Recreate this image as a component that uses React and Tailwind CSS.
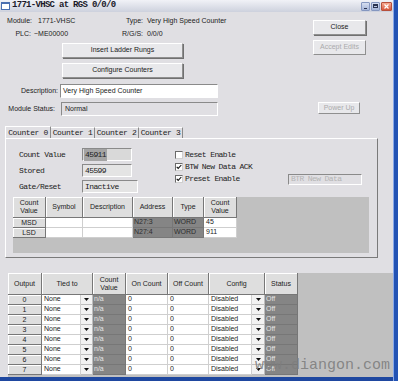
import React from 'react';

const sans = "font-['Liberation_Sans',Arial,sans-serif]";
const mono = "font-['Liberation_Mono','Courier_New',monospace]";

const Btn = ({ children, className = '', disabled }) => (
  <div
    className={`flex items-center justify-center border border-t-white border-l-white border-r-[#8f8f8f] border-b-[#8f8f8f] bg-[#e8e8eb] text-[7px] ${sans} ${
      disabled ? 'text-[#ababab]' : 'text-[#1a1a1a] shadow-[1px_1px_0_#707070]'
    } ${className}`}
  >
    {children}
  </div>
);

const Inset = ({ children, className = '' }) => (
  <div className={`flex items-center border border-t-[#8a8a8a] border-l-[#8a8a8a] border-r-white border-b-white ${className}`}>
    {children}
  </div>
);

const Hd = ({ children, className = '' }) => (
  <div
    className={`flex items-center justify-center text-center leading-[8px] text-[#222] bg-[#dedede] border-r border-b border-r-[#777] border-b-[#777] shadow-[inset_1px_1px_0_#fff] ${className}`}
  >
    {children}
  </div>
);

const White = ({ children }) => (
  <div className="flex items-center pl-[2px] bg-white border-r border-b border-[#cfcfcf] text-[#222]">{children}</div>
);

const Dark = ({ children, light }) => (
  <div
    className={`flex items-center pl-[1px] bg-[#858585] border-r border-b border-[#777] ${light ? 'text-[#e4e4e4]' : 'text-[#2e2e2e]'}`}
  >
    {children}
  </div>
);

const Arrow = () => (
  <div className="flex items-center justify-center bg-[#f2f2f2] border-r border-b border-[#bdbdbd]">
    <svg width="5" height="3" viewBox="0 0 5 3">
      <path d="M0 0h5L2.5 3z" fill="#111" />
    </svg>
  </div>
);

const Check = ({ checked, label, className = '' }) => (
  <div className={`flex items-center ${className}`}>
    <div className="w-[8px] h-[8px] bg-white border border-t-[#6a6a6a] border-l-[#6a6a6a] border-r-[#cfcfcf] border-b-[#cfcfcf] flex items-center justify-center">
      {checked && (
        <svg width="6" height="6" viewBox="0 0 6 6">
          <path d="M0.7 2.8l1.5 1.6L5.3 1" stroke="#111" strokeWidth="1.1" fill="none" />
        </svg>
      )}
    </div>
    <span className="ml-[2px]">{label}</span>
  </div>
);

const TitleBar = () => (
  <div className="h-[12px] flex items-center bg-gradient-to-b from-[#f1f2f7] to-[#cdd1dd] pl-[1px]">
    <div className="w-[9px] h-[8px] bg-white border border-[#4a6fb0] border-t-2" />
    <span className={`ml-[2px] text-[9px] font-bold tracking-[-0.7px] text-[#1a1a2a] ${mono}`}>1771-VHSC at RGS 0/0/0</span>
    <div className="ml-auto flex items-center gap-[1px] pr-[1px]">
      <div className="w-[9px] h-[9px] rounded-[1px] bg-gradient-to-b from-[#d6def0] to-[#a5b5d8] border border-[#8597c0] flex items-end justify-center pb-[1px]">
        <div className="w-[3px] h-[1px] bg-[#2a3350]" />
      </div>
      <div className="w-[9px] h-[9px] rounded-[1px] bg-gradient-to-b from-[#d6def0] to-[#a5b5d8] border border-[#8597c0] flex items-center justify-center">
        <div className="w-[5px] h-[4px] border border-t-2 border-[#2a3350]" />
      </div>
      <div className="w-[11px] h-[9px] rounded-[1px] bg-gradient-to-b from-[#f5a890] to-[#d5553c] border border-[#b7503c] flex items-center justify-center">
        <svg width="5" height="5" viewBox="0 0 5 5">
          <path d="M0.5 0.5l4 4M4.5 0.5l-4 4" stroke="#fff" strokeWidth="1.2" />
        </svg>
      </div>
    </div>
  </div>
);

const outputs = [0, 1, 2, 3, 4, 5, 6, 7];

export default function App() {
  return (
    <div className="relative w-[398px] h-[381px] overflow-hidden flex bg-[#1f48a0]">
      <div className="flex flex-col w-[393px]">
        <TitleBar />
        <div className="flex-1 flex flex-col bg-[#e0dfe3]">
          {/* header info + buttons */}
          <div className="flex">
            <div className={`w-[313px] flex flex-col text-[7px] text-[#222] ${sans}`}>
              <div className="mt-[3px] h-[12px] flex items-center">
                <span className="w-[32px] text-right">Module:</span>
                <span className="w-[93px] pl-[6px]">1771-VHSC</span>
                <span className="w-[18px] text-right">Type:</span>
                <span className="pl-[4px]">Very High Speed Counter</span>
              </div>
              <div className="mt-[1px] h-[12px] flex items-center">
                <span className="w-[31px] text-right">PLC:</span>
                <span className="w-[91px] pl-[3px]">~ME00000</span>
                <span className="w-[21px] text-right">R/G/S:</span>
                <span className="pl-[4px]">0/0/0</span>
              </div>
              <Btn className="mt-[3px] ml-[62px] w-[121px] h-[15px]">Insert Ladder Rungs</Btn>
              <Btn className="mt-[5px] ml-[62px] w-[121px] h-[15px]">Configure Counters</Btn>
              <div className="mt-[6px] h-[14px] flex items-center">
                <span className="w-[58px] text-right">Description:</span>
                <Inset className="ml-[2px] w-[158px] h-full bg-white pl-[2px]">Very High Speed Counter</Inset>
              </div>
              <div className="mt-[4px] h-[14px] flex items-center">
                <span className="w-[55px] text-right">Module Status:</span>
                <Inset className="ml-[6px] w-[157px] h-full pl-[3px]">Normal</Inset>
              </div>
            </div>
            <div className="w-[53px] flex flex-col">
              <Btn className="mt-[8px] h-[15px]">Close</Btn>
              <Btn disabled className="mt-[5px] h-[15px]">Accept Edits</Btn>
              <Btn disabled className="mt-[47px] ml-[5px] w-[42px] h-[12px] border-[#c4c4c4]">Power Up</Btn>
            </div>
          </div>

          {/* tabs */}
          <div className={`mt-[10px] ml-[5px] flex items-end h-[12px] text-[8px] tracking-[-0.4px] text-[#222] ${mono}`}>
            <div className="h-[12px] w-[46px] border-t border-l border-r border-t-white border-l-white border-r-[#8a8a8a] flex items-center justify-center">
              Counter 0
            </div>
            {['Counter 1', 'Counter 2', 'Counter 3'].map((t) => (
              <div key={t} className="h-[11px] w-[44px] border-r border-t border-t-white border-r-[#8a8a8a] flex items-center justify-center">
                {t}
              </div>
            ))}
          </div>

          {/* tab panel */}
          <div className="ml-[5px] w-[373px] h-[120px] border border-t-white border-l-white border-r-[#7a7a7a] border-b-[#7a7a7a] flex flex-col">
            <div className={`mt-[9px] pl-[13px] flex text-[8px] tracking-[-0.6px] text-[#222] ${mono}`}>
              <div className="w-[156px] flex flex-col gap-[3px]">
                <div className="h-[13px] flex items-center">
                  <span className="w-[63px]">Count Value</span>
                  <Inset className="w-[50px] h-full bg-[#d9d9d9] pl-[1px]">
                    <span className="bg-[#a4a4a4] px-[1px]">45911</span>
                  </Inset>
                </div>
                <div className="h-[13px] flex items-center">
                  <span className="w-[63px]">Stored</span>
                  <Inset className="w-[50px] h-full bg-[#e4e4e4] pl-[2px]">45599</Inset>
                </div>
                <div className="h-[13px] flex items-center">
                  <span className="w-[63px]">Gate/Reset</span>
                  <Inset className="w-[56px] h-full bg-[#e4e4e4] pl-[2px]">Inactive</Inset>
                </div>
              </div>
              <div className="flex flex-col">
                <Check className="h-[13px]" label="Reset Enable" />
                <Check className="h-[12px]" checked label="BTW New Data ACK" />
                <div className="h-[12px] flex items-center">
                  <Check className="w-[113px]" checked label="Preset Enable" />
                  <Inset className="w-[74px] h-[11px] pl-[2px] text-[#b4b4b4] border-[#c8c8c8]">BTR New Data</Inset>
                </div>
              </div>
            </div>

            <div className={`mt-[4px] ml-[7px] w-[356px] h-[56px] bg-[#c0c0c0] text-[7px] ${sans}`}>
              <div className="grid grid-cols-[33px_37px_50px_40px_31px_33px] grid-rows-[21px_10px_10px] w-[224px]">
                <Hd>
                  Count
                  <br />
                  Value
                </Hd>
                <Hd>Symbol</Hd>
                <Hd>Description</Hd>
                <Hd>Address</Hd>
                <Hd>Type</Hd>
                <Hd>
                  Count
                  <br />
                  Value
                </Hd>
                <Hd>MSD</Hd>
                <White />
                <White />
                <Dark>N27:3</Dark>
                <Dark>WORD</Dark>
                <White>45</White>
                <Hd>LSD</Hd>
                <White />
                <White />
                <Dark>N27:4</Dark>
                <Dark>WORD</Dark>
                <White>911</White>
              </div>
            </div>
          </div>

          {/* outputs grid */}
          <div className={`mt-[15px] ml-[8px] flex-1 bg-[#c0c0c0] text-[7px] ${sans}`}>
            <div className="grid grid-cols-[34px_39px_12px_33px_42px_41px_43px_13px_33px] grid-rows-[22px_repeat(8,10px)] w-[290px]">
              <Hd>Output</Hd>
              <Hd className="col-span-2">Tied to</Hd>
              <Hd>
                Count
                <br />
                Value
              </Hd>
              <Hd>On Count</Hd>
              <Hd>Off Count</Hd>
              <Hd className="col-span-2">Config</Hd>
              <Hd>Status</Hd>
              {outputs.map((n) => (
                <React.Fragment key={n}>
                  <Hd>{n}</Hd>
                  <White>None</White>
                  <Arrow />
                  <Dark light>n/a</Dark>
                  <White>0</White>
                  <White>0</White>
                  <White>Disabled</White>
                  <Arrow />
                  <Dark light>Off</Dark>
                </React.Fragment>
              ))}
            </div>
          </div>
        </div>
        <div className="h-[4px] bg-[#1f48a0]" />
      </div>
      <div className="w-[5px] bg-[#2353b4] border-l border-[#88a8e8]" />
      <div className={`absolute left-[255px] top-[357px] text-[15px] leading-[18px] text-[#7e7e7e]/90 ${mono}`}>
        www.diangon.com
      </div>
    </div>
  );
}
